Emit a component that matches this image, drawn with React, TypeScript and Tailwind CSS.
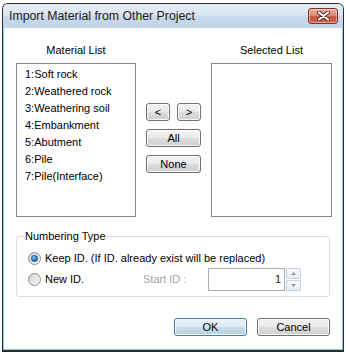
import React from 'react';

const materials = [
  '1:Soft rock',
  '2:Weathered rock',
  '3:Weathering soil',
  '4:Embankment',
  '5:Abutment',
  '6:Pile',
  '7:Pile(Interface)',
];

const Btn: React.FC<{ label: string; w: string; isDefault?: boolean }> = ({ label, w, isDefault }) => (
  <button
    className={`${w} h-[18px] rounded-[3px] border text-[11px] leading-[16px] text-black shadow-[inset_0_0_0_1px_rgba(255,255,255,0.85)] ${
      isDefault
        ? 'border-[#3c7fb1] bg-[linear-gradient(#eaf3f9_0%,#dde9f3_48%,#c8dcec_52%,#b9d1e5_100%)]'
        : 'border-[#707070] bg-[linear-gradient(#f2f2f2_0%,#ebebeb_48%,#dddddd_52%,#cfcfcf_100%)]'
    }`}
  >
    {label}
  </button>
);

const Radio: React.FC<{ checked?: boolean; id: string }> = ({ checked, id }) => (
  <svg width="13" height="13" viewBox="0 0 13 13" className="shrink-0">
    <defs>
      <linearGradient id={`rg-${id}`} x1="0" y1="0" x2="1" y2="1">
        <stop offset="0" stopColor="#cfcfcf" />
        <stop offset="1" stopColor="#fbfbfb" />
      </linearGradient>
      <radialGradient id={`dot-${id}`} cx="0.4" cy="0.35" r="0.7">
        <stop offset="0" stopColor="#8fd0f8" />
        <stop offset="0.55" stopColor="#2f7cc6" />
        <stop offset="1" stopColor="#1a4f8c" />
      </radialGradient>
    </defs>
    <circle cx="6.5" cy="6.5" r="6" fill={`url(#rg-${id})`} stroke="#8b8c8c" />
    {checked && <circle cx="6.5" cy="6.5" r="3.2" fill={`url(#dot-${id})`} stroke="#2b5d93" strokeWidth="0.6" />}
  </svg>
);

const Arrow: React.FC<{ up?: boolean }> = ({ up }) => (
  <svg width="5" height="3" viewBox="0 0 5 3">
    <path d={up ? 'M0 3 L2.5 0 L5 3 Z' : 'M0 0 L2.5 3 L5 0 Z'} fill="#9a9a9a" />
  </svg>
);

export default function App() {
  return (
    <div className="w-[346px] h-[354px] bg-white pt-[3px] pl-[2px] font-['Liberation_Sans',Arial,sans-serif] text-black">
      {/* window */}
      <div className="w-[342px] h-[349px] flex flex-col border border-b-2 border-[#2b2b2b] rounded-t-[6px] overflow-hidden">
        {/* title bar */}
        <div className="h-[24px] shrink-0 flex items-start justify-between pl-[6px] pr-[5px] bg-[linear-gradient(#e6eef7_0%,#d9e5f2_45%,#c9d9ec_55%,#c3d4e9_100%)]">
          <span className="pt-[5px] text-[12.3px] leading-[15px] text-[#1a1a1a]">Import Material from Other Project</span>
          <div className="mt-[4px] w-[30px] h-[16px] rounded-[3px] border border-[#7c3326] flex items-center justify-center bg-[linear-gradient(#eab0a2_0%,#dc8a78_45%,#c9533e_55%,#d2654c_100%)] shadow-[inset_0_0_0_1px_rgba(255,230,220,0.45)]">
            <svg width="13" height="10" viewBox="0 0 13 10">
              <path d="M2 1.5 L11 8.5 M11 1.5 L2 8.5" stroke="#4a2a24" strokeWidth="4" strokeLinecap="round" />
              <path d="M2 1.5 L11 8.5 M11 1.5 L2 8.5" stroke="#ffffff" strokeWidth="2.2" strokeLinecap="round" />
            </svg>
          </div>
        </div>

        {/* content */}
        <div className="flex-1 bg-white border-x border-b border-[#8bcfee] pl-[12px] pt-[16px] flex flex-col text-[11px]">
          <div className="flex leading-[13px]">
            <div className="w-[120px] text-center">Material List</div>
            <div className="w-[121px] ml-[75px] text-center">Selected List</div>
          </div>

          <div className="flex mt-[6px] h-[154px]">
            <div className="w-[120px] h-full border border-[#828790] pt-[2px] pl-[8px]">
              {materials.map((m) => (
                <div key={m} className="leading-[17px]">{m}</div>
              ))}
            </div>
            <div className="ml-[10px] w-[55px] pt-[40px] flex flex-col gap-[8px]">
              <div className="flex justify-between">
                <Btn label="<" w="w-[24px]" />
                <Btn label=">" w="w-[24px]" />
              </div>
              <Btn label="All" w="w-[55px]" />
              <Btn label="None" w="w-[55px]" />
            </div>
            <div className="ml-[10px] w-[121px] h-full border border-[#828790]" />
          </div>

          {/* group box */}
          <div className="mt-[19px] w-[314px] h-[61px] border border-[#d5dfe5] rounded-[3px] pl-[11px]">
            <span className="block w-fit -mt-[7px] -ml-[4px] px-[1px] bg-white leading-[13px]">Numbering Type</span>
            <div className="mt-[8px] h-[14px] flex items-center gap-[4px]">
              <Radio checked id="a" />
              <span>Keep ID. (If ID. already exist will be replaced)</span>
            </div>
            <div className="mt-[3px] h-[23px] flex items-center">
              <Radio id="b" />
              <span className="ml-[4px] w-[98px]">New ID.</span>
              <span className="w-[65px] text-[#a3a3a3]">Start ID :</span>
              <div className="w-[77px] h-[23px] border border-[#abadb3] flex items-center justify-end pr-[3px] text-[#222]">1</div>
              <div className="ml-[1px] w-[15px] h-[23px] flex flex-col gap-[1px]">
                <div className="h-[11px] border border-[#c3d0de] rounded-[1px] bg-[linear-gradient(#f8f9fb,#e9edf2)] flex items-center justify-center">
                  <Arrow up />
                </div>
                <div className="h-[11px] border border-[#c3d0de] rounded-[1px] bg-[linear-gradient(#f8f9fb,#e9edf2)] flex items-center justify-center">
                  <Arrow />
                </div>
              </div>
            </div>
          </div>

          <div className="mt-[21px] flex justify-end gap-[10px] pr-[12px]">
            <Btn label="OK" w="w-[73px]" isDefault />
            <Btn label="Cancel" w="w-[73px]" />
          </div>
        </div>
      </div>
    </div>
  );
}
